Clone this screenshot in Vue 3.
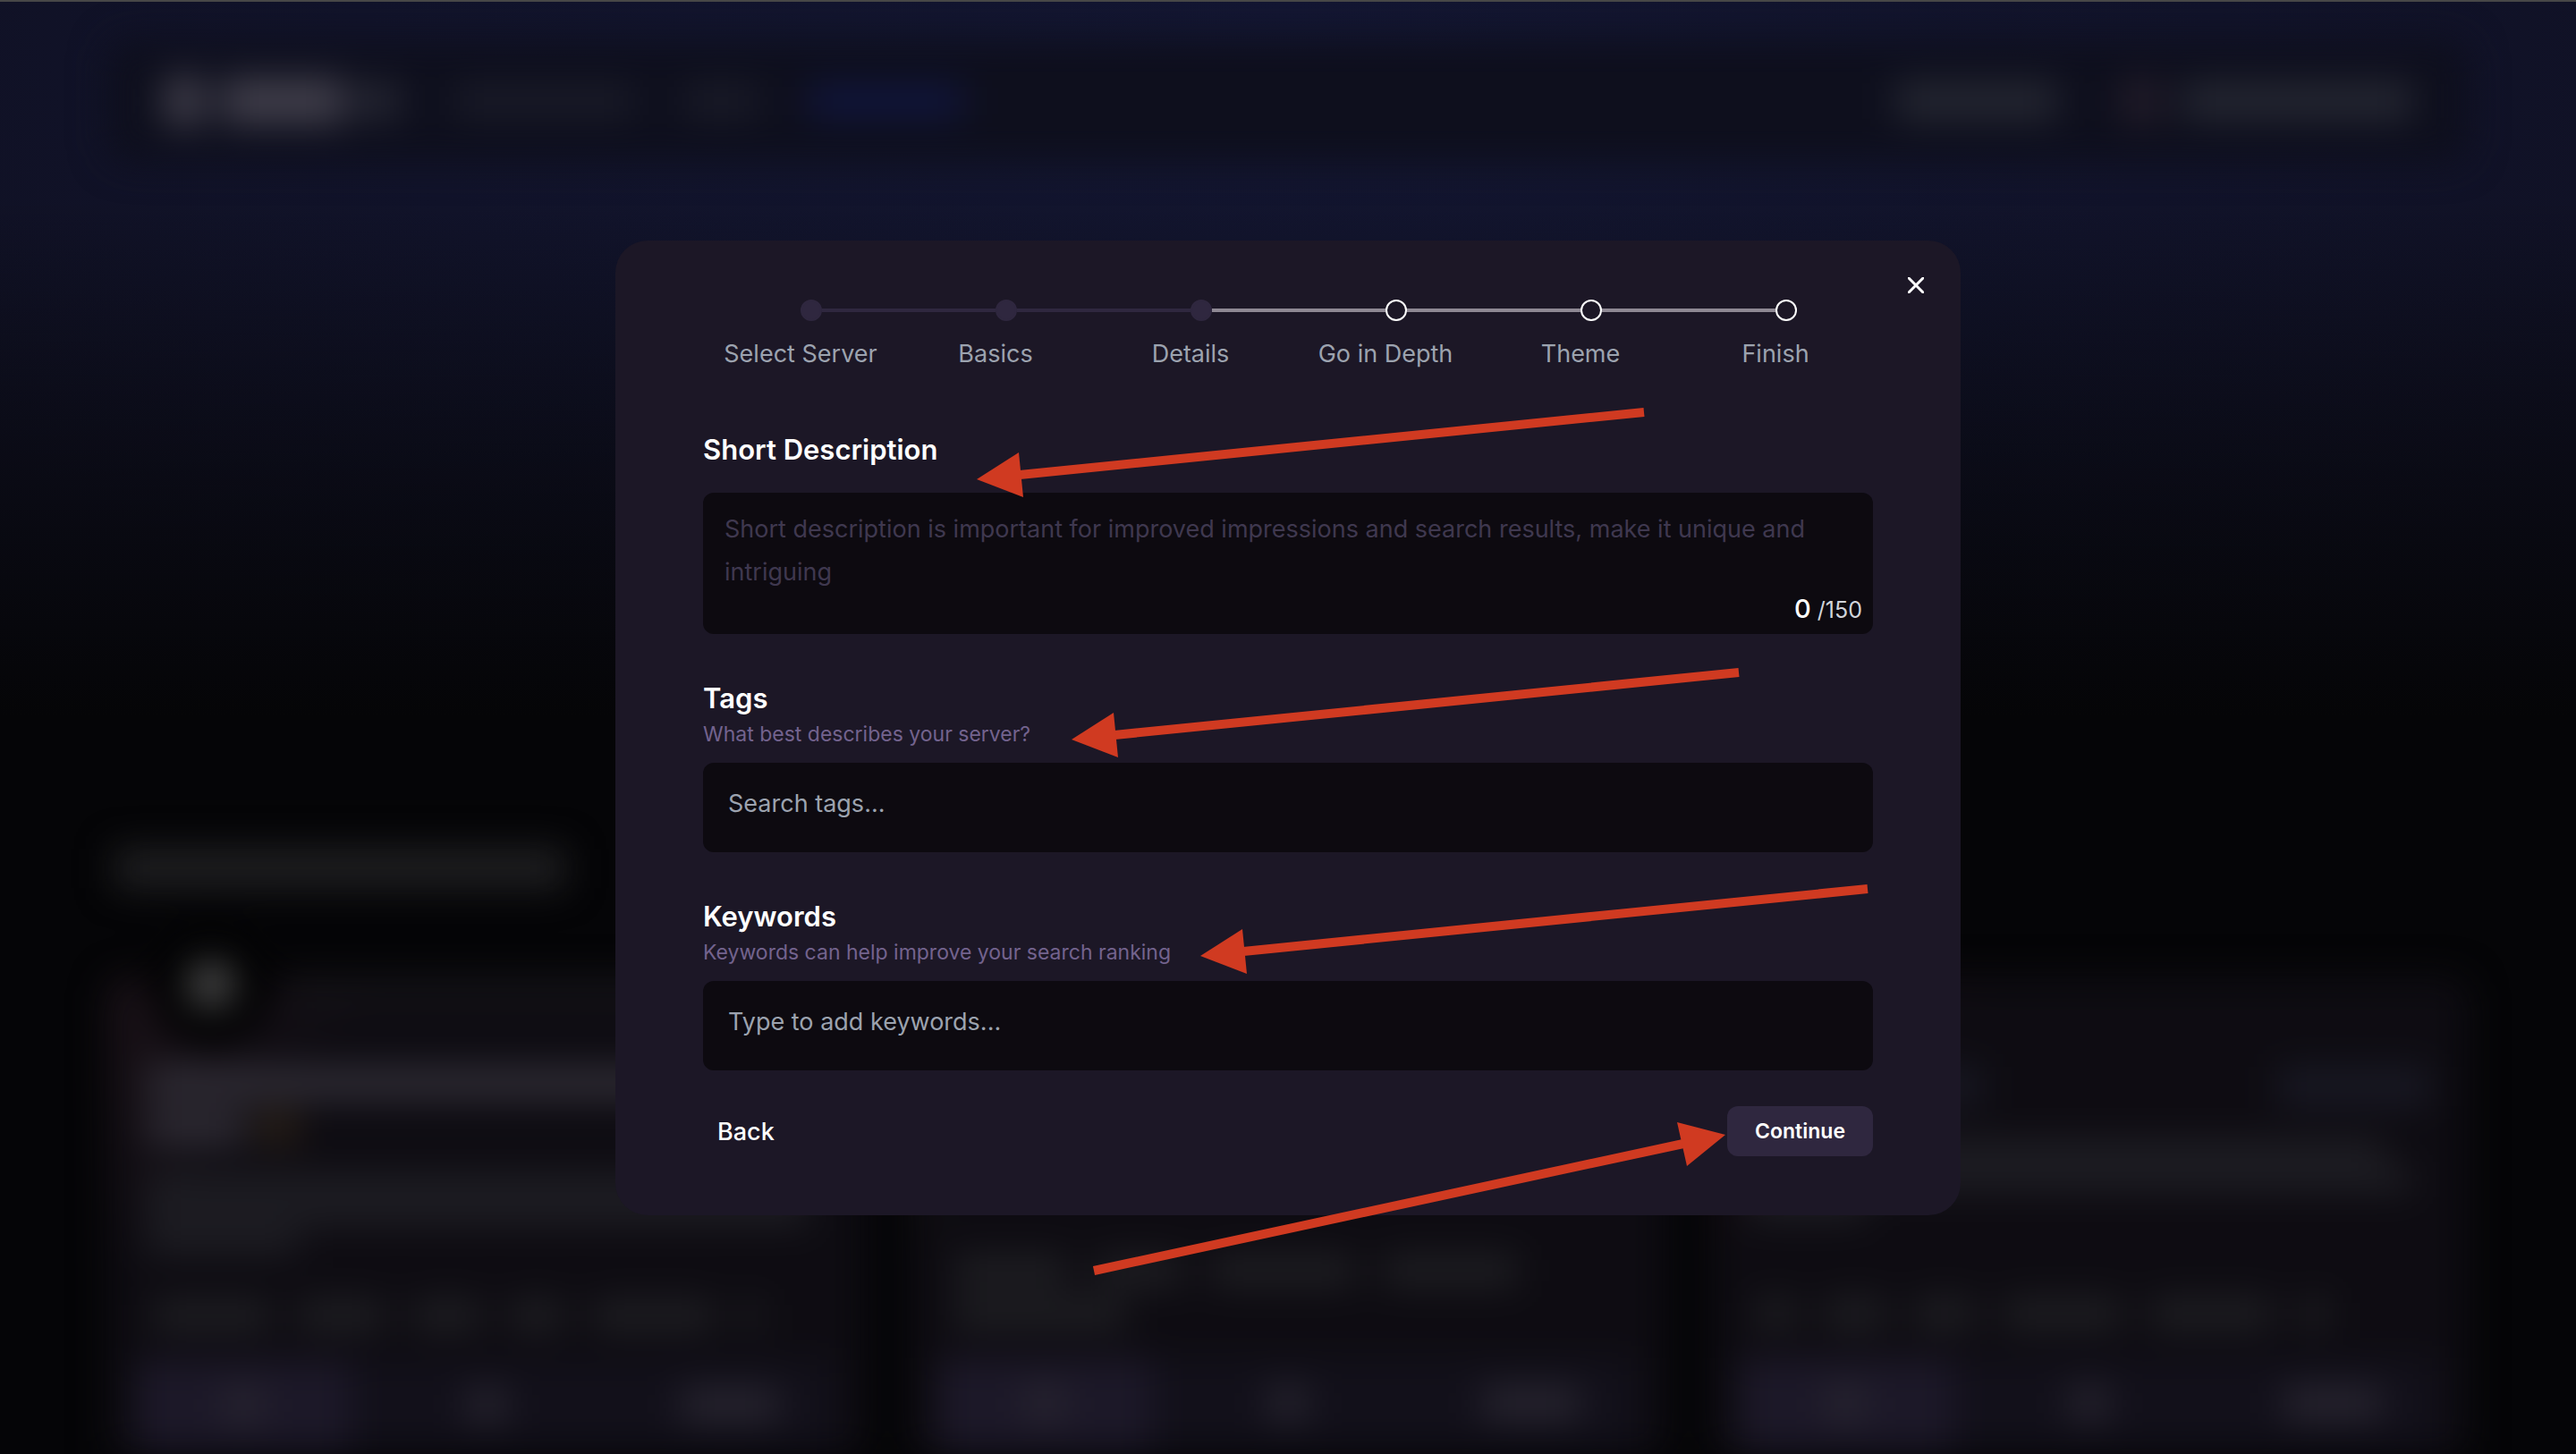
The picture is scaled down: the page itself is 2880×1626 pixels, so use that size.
<script setup>
import { ref } from 'vue'

const steps = [
  { label: 'Select Server', done: true, lineDone: true },
  { label: 'Basics', done: true, lineDone: true },
  { label: 'Details', done: true, lineDone: false },
  { label: 'Go in Depth', done: false, lineDone: false },
  { label: 'Theme', done: false, lineDone: false },
  { label: 'Finish', done: false, lineDone: false },
]

const description = ref('')
const tags = ref('')
const keywords = ref('')

// Dimmed cards behind the dialog: the kind of each row and the widths of its bars
const cards = [
  {
    accent: '#1b1218',
    avatar: true,
    rows: [
      { kind: 'name', bars: [400] },
      { kind: 'title', bars: [660] },
      { kind: 'title', bars: [110, 46] },
      { kind: 'text', bars: [730] },
      { kind: 'text', bars: [740] },
      { kind: 'text', bars: [170] },
    ],
    tags: [[130, 96, 76, 60, 136, 20]],
  },
  {
    accent: '#14140f',
    avatar: false,
    rows: [],
    tags: [[126, 96, 160, 150], [190]],
  },
  {
    accent: '#1b0c10',
    avatar: false,
    rows: [
      { kind: 'name', bars: [] },
      { kind: 'pill', bars: [260, 170] },
      { kind: 'text', bars: [710] },
      { kind: 'text', bars: [740] },
      { kind: 'text', bars: [130] },
    ],
    tags: [[44, 68, 68, 132, 136, 30]],
  },
]
</script>

<template>
  <div class="page">
    <div class="scenery" aria-hidden="true">
      <div class="topbar">
        <i class="logo"></i>
        <i class="brand"></i>
        <i class="brand-end"></i>
        <i class="nav wide"></i>
        <i class="nav"></i>
        <i class="nav active"></i>
        <i class="action"></i>
        <i class="user-pic"></i>
        <i class="action user"></i>
      </div>
      <i class="section-title"></i>
      <div class="cards">
        <div v-for="(card, i) in cards" :key="i" class="card" :style="{ '--accent': card.accent }">
          <div v-if="card.avatar" class="avatar"><i></i></div>
          <div class="body">
            <div v-for="(row, r) in card.rows" :key="r" class="row" :class="row.kind">
              <i v-for="(w, b) in row.bars" :key="b" :style="{ width: w + 'px' }"></i>
            </div>
          </div>
          <div class="tag-group">
            <div v-for="(line, t) in card.tags" :key="t" class="row tags">
              <i v-for="(w, b) in line" :key="b" :style="{ width: w + 'px' }"></i>
            </div>
          </div>
          <div class="actions">
            <span class="main"><i></i></span>
            <span><i></i></span>
            <span class="last"><i></i></span>
          </div>
        </div>
      </div>
    </div>

    <form class="modal" role="dialog" aria-label="Server details" @submit.prevent>
      <button class="close" type="button" aria-label="Close">
        <svg viewBox="0 0 18 18" width="18" height="18">
          <path d="M1 1 17 17M17 1 1 17" fill="none" stroke="#fff" stroke-width="3" stroke-linecap="round" />
        </svg>
      </button>

      <ol class="steps">
        <li v-for="step in steps" :key="step.label">
          <div class="track">
            <span class="dot" :class="{ done: step.done }"></span>
            <span class="line" :class="{ done: step.lineDone }"></span>
          </div>
          <span class="step-label">{{ step.label }}</span>
        </li>
      </ol>

      <section class="field first">
        <label class="heading" for="description">Short Description</label>
        <div class="area">
          <textarea
            id="description"
            v-model="description"
            maxlength="150"
            placeholder="Short description is important for improved impressions and search results, make it unique and intriguing"
          ></textarea>
          <p class="counter"><b>{{ description.length }}</b> /150</p>
        </div>
      </section>

      <section class="field">
        <label class="heading" for="tags">Tags</label>
        <p class="hint">What best describes your server?</p>
        <input id="tags" v-model="tags" type="text" placeholder="Search tags..." />
      </section>

      <section class="field">
        <label class="heading" for="keywords">Keywords</label>
        <p class="hint">Keywords can help improve your search ranking</p>
        <input id="keywords" v-model="keywords" type="text" placeholder="Type to add keywords..." />
      </section>

      <footer class="buttons">
        <button class="back" type="button">Back</button>
        <button class="continue" type="submit">Continue</button>
      </footer>

      <svg class="arrows" viewBox="0 0 1504 1090" aria-hidden="true">
        <defs>
          <g id="arrow">
            <path d="M746-75 48-5" stroke-width="10" />
            <path d="M0 0 47-30 52 20Z" stroke="none" />
          </g>
        </defs>
        <g fill="#d03a21" stroke="#d03a21">
          <use href="#arrow" x="404" y="267" />
          <use href="#arrow" x="510" y="558" />
          <use href="#arrow" x="654" y="800" />
          <path d="M535 1152 1194 1010" stroke-width="10" />
          <path d="M1241 1000 1187 986 1198 1035Z" stroke="none" />
        </g>
      </svg>
    </form>
  </div>
</template>

<style>
body {
  margin: 0;
  background: #050507;
}
</style>

<style scoped>
* {
  box-sizing: border-box;
}

.page {
  position: relative;
  display: flex;
  align-items: center;
  justify-content: center;
  min-height: 100vh;
  overflow: hidden;
  border-top: 2px solid #474747;
  font-family: "Inter", "Liberation Sans", sans-serif;
  color: #fff;
  background:
    linear-gradient(180deg, transparent 0, transparent 220px, #050507 800px),
    radial-gradient(ellipse 60% 900px at 50% 0, #131632 0, #11132a 60%, #101124 100%);
}

/* Dimmed page behind the dialog */
.scenery {
  position: absolute;
  inset: 0;
  padding: 0 120px;
  overflow: hidden;
  filter: blur(20px);
}

.scenery i {
  display: block;
  flex: none;
}

.topbar {
  display: flex;
  align-items: center;
  height: 136px;
  margin-top: 43px;
  padding: 0 64px;
  border-radius: 24px;
  background: #0e0f1d;
}

.logo {
  width: 44px;
  height: 56px;
  background: #3f3d49;
}

.brand {
  width: 136px;
  height: 52px;
  margin-left: 20px;
  background: #403e4a;
}

.brand-end {
  width: 56px;
  height: 40px;
  margin-left: 8px;
  background: #252632;
}

.nav {
  width: 84px;
  height: 36px;
  margin-left: 56px;
  background: #1a1b28;
}

.nav.wide {
  width: 200px;
  margin-left: 60px;
}

.nav.active {
  width: 172px;
  background: #10153e;
}

.action {
  width: 180px;
  height: 44px;
  margin-left: auto;
  background: #242631;
}

.user-pic {
  width: 44px;
  height: 52px;
  margin-left: 72px;
  background: #221c29;
}

.action.user {
  width: 256px;
  margin-left: 24px;
}

.section-title {
  width: 504px;
  height: 44px;
  margin-top: 768px;
  margin-left: 8px;
  background: #202022;
}

.cards {
  display: grid;
  grid-template-columns: repeat(3, 1fr);
  gap: 48px;
  margin-top: 100px;
}

.card {
  position: relative;
  display: flex;
  flex-direction: column;
  padding: 0 32px;
  border-radius: 24px;
  background:
    linear-gradient(135deg, var(--accent) 0, transparent 240px),
    #0e0c12;
}

.body {
  display: flex;
  flex: 0 0 312px;
  flex-direction: column;
  gap: 8px;
  padding: 4px 12px;
}

.row {
  display: flex;
  flex: none;
  gap: 14px;
}

.row.name {
  height: 88px;
}

.row.name i {
  height: 20px;
  margin-left: 160px;
  background: #17161a;
}

.row.title {
  height: 42px;
}

.row.title i {
  height: 36px;
  background: #302d36;
}

.row.title i + i {
  background: #2a2016;
}

.row.title + .row.text {
  margin-top: 22px;
}

.row.text {
  height: 24px;
}

.row.text i {
  height: 20px;
  background: #24242a;
}

.row.pill {
  justify-content: space-between;
  height: 76px;
}

.row.pill i {
  height: 44px;
  background: #181823;
}

.tag-group {
  display: flex;
  flex: 0 0 96px;
  flex-direction: column;
  justify-content: flex-end;
}

.row.tags {
  gap: 32px;
  height: 48px;
  padding: 0 20px;
}

.row.tags i {
  height: 32px;
  background: #202024;
}

.avatar {
  position: absolute;
  top: -60px;
  left: 48px;
  display: flex;
  align-items: center;
  justify-content: center;
  width: 136px;
  height: 136px;
  border-radius: 68px;
  background: #020203;
}

.avatar i {
  width: 48px;
  height: 48px;
  background: #484848;
}

.actions {
  display: flex;
  flex: none;
  justify-content: space-between;
  height: 200px;
  margin-top: 18px;
  background: #12101a;
}

.actions span {
  display: flex;
  justify-content: center;
  width: 240px;
  padding-top: 32px;
}

.actions .main {
  background: #1c1828;
}

.actions i {
  width: 44px;
  height: 36px;
  background: #282530;
}

.actions .last i {
  width: 110px;
}

/* Dialog */
.modal {
  position: relative;
  width: 1504px;
  max-width: 100%;
  padding: 66px 98px;
  border-radius: 36px;
  background: #1c1726;
}

.close {
  position: absolute;
  top: 38px;
  right: 38px;
  display: flex;
  padding: 3px;
  border: 0;
  background: none;
}

.steps {
  display: grid;
  grid-template-columns: repeat(6, 1fr);
  margin: 0;
  padding: 0;
  list-style: none;
}

.track {
  display: flex;
  align-items: center;
  width: 100%;
  margin-left: 50%;
}

.dot {
  flex: none;
  width: 24px;
  height: 24px;
  border: 2px solid #fff;
  border-radius: 12px;
}

.dot.done {
  border-color: #2f273f;
  background: #2f273f;
}

.line {
  flex: 1;
  height: 4px;
  background: #8e8893;
}

.line.done {
  background: #2f273f;
}

li:last-child .line {
  display: none;
}

.step-label {
  display: block;
  margin-top: 16px;
  font-size: 27px;
  line-height: 42px;
  text-align: center;
  color: #9ca3af;
}

.field {
  margin-top: 52px;
}

.field.first {
  margin-top: 66px;
}

.heading {
  display: block;
  font-size: 31px;
  font-weight: 600;
  line-height: 40px;
}

.hint {
  margin: 4px 0 16px;
  font-size: 23px;
  line-height: 32px;
  color: #73638e;
}

.area {
  position: relative;
  margin-top: 28px;
}

textarea,
input {
  display: block;
  width: 100%;
  border: 0;
  border-radius: 12px;
  outline: 0;
  font: 27px/48px "Inter", "Liberation Sans", sans-serif;
  color: #fff;
  background: #0d0a10;
}

textarea {
  height: 158px;
  padding: 17px 24px;
  resize: none;
  overflow: hidden;
}

input {
  height: 100px;
  padding: 0 28px 10px;
}

textarea::placeholder {
  color: #3f384f;
}

input::placeholder {
  color: #9ca3af;
}

.counter {
  position: absolute;
  right: 12px;
  bottom: 9px;
  margin: 0;
  font-size: 25px;
  line-height: 36px;
  color: #d1d5db;
}

.counter b {
  font-size: 29px;
  font-weight: 500;
  color: #fff;
}

.buttons {
  display: flex;
  align-items: center;
  justify-content: space-between;
  margin-top: 40px;
}

.buttons button {
  height: 56px;
  border: 0;
  border-radius: 12px;
  font-family: inherit;
  color: #fff;
}

.back {
  padding: 0 16px;
  font-size: 27px;
  font-weight: 500;
  background: none;
}

.continue {
  padding: 0 31px;
  font-size: 23px;
  font-weight: 600;
  background: #2f273f;
}

.arrows {
  position: absolute;
  inset: 0;
  width: 100%;
  height: 100%;
  overflow: visible;
  pointer-events: none;
}
</style>
